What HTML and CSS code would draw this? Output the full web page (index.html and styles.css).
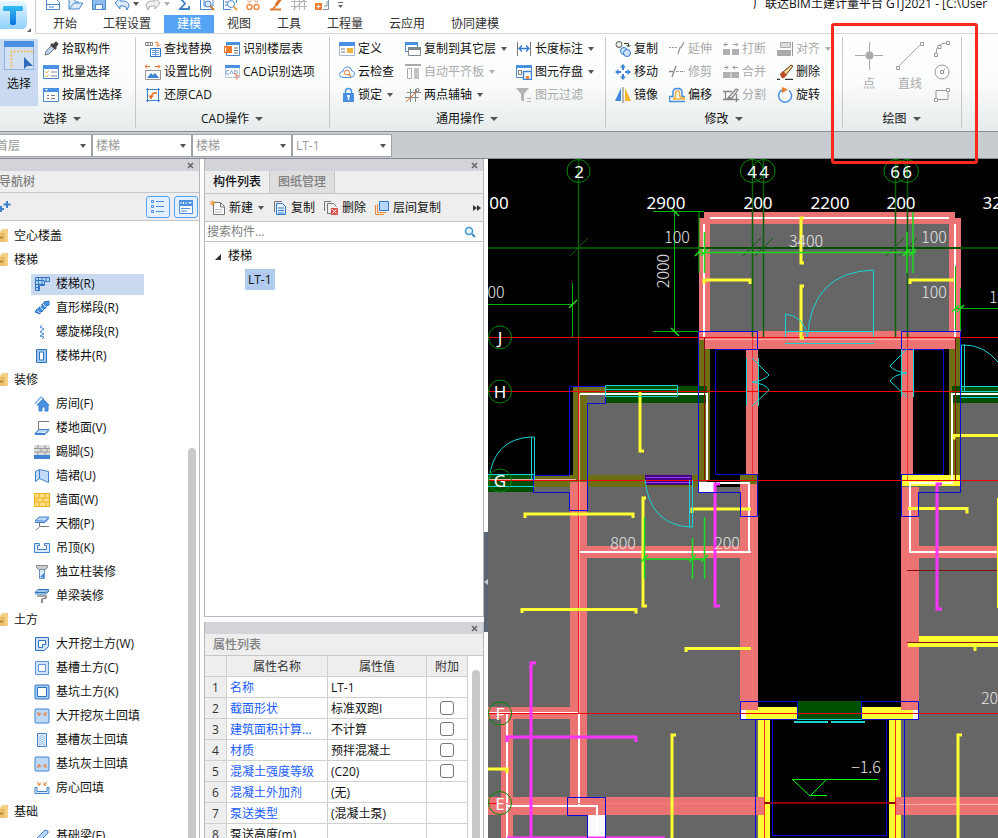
FILE: index.html
```html
<!DOCTYPE html>
<html lang="zh-CN">

<head>
    <meta charset="UTF-8">
    <title>广联达BIM土建计量平台 GTJ2021</title>
    <link rel="stylesheet" href="styles.css">
</head>

<body>
    <!-- shared icons -->
    <svg class="defs" aria-hidden="true">
        <symbol id="folder" viewBox="0 0 16 16">
            <path d="M1 4h7l2-3h6v13H1z" fill="#f3cf87" />
            <path d="M1 5h12v9H1z" fill="#e9bd68" />
            <path d="M6 9.500h5" stroke="#a87b28" stroke-width="1.500" />
        </symbol>
        <symbol id="close" viewBox="0 0 7 7">
            <path d="M1 1l5 5M6 1L1 6" stroke="#666" stroke-width="1.500" />
        </symbol>
    </svg>

    <div class="app">
        <header class="header">
            <button class="logo" aria-label="菜单">
                <svg width="36" height="33" viewBox="0 0 36 33">
                    <defs>
                        <linearGradient id="lg" x1="0" y1="0" x2="0" y2="1">
                            <stop offset="0" stop-color="#e9f7ff" />
                            <stop offset="1" stop-color="#8fd0fb" />
                        </linearGradient>
                        <linearGradient id="lt" x1="0" y1="0" x2="0" y2="1">
                            <stop offset="0" stop-color="#35bdf0" />
                            <stop offset="1" stop-color="#0d6fe0" />
                        </linearGradient>
                    </defs>
                    <rect x="-4" y="1" width="31" height="28" rx="5" fill="url(#lg)" />
                    <path d="M4 6h18q1 0 1 2.500T22 11h-6v12q0 2-3 2t-3-2V11H4q-1 0-1-2.500T4 6z" fill="url(#lt)" />
                    <path d="M31 28v4h-4z" fill="#666" />
                </svg>
            </button>
            <div class="header-main">
                <div class="title-row">
                    <div class="quickbar">
                        <svg class="icon" viewBox="0 0 16 16"><path d="M1.500 3.500h9l4 4v7h-13zM1.500 9.500h13" fill="#fff" stroke="#4a86c8" /><path d="M4 12h5" stroke="#4a86c8" /></svg>
                        <svg class="icon" viewBox="0 0 16 16"><path d="M1 14V4h5l2 3h3M1 14l5-6h9l-4 6z" fill="#dcebfb" stroke="#4a86c8" /></svg>
                        <svg class="icon" viewBox="0 0 16 16"><path d="M1.500 2.500h13v12h-13z" fill="#8ebcf0" stroke="#4a86c8" /><path d="M4.500 9.500h7v5h-7z" fill="#fff" stroke="#4a86c8" /></svg>
                        <svg class="icon" viewBox="0 0 16 16"><path d="M1 8l5-5v3h3q6 0 6 5l-2 4q0-4-4-4H6v3z" fill="#dcebfb" stroke="#4a86c8" /></svg>
                        <i class="caret"></i>
                        <svg class="icon" viewBox="0 0 16 16"><path d="M15 8l-5-5v3H7q-6 0-6 5l2 4q0-4 4-4h3v3z" fill="#f0f0f0" stroke="#aaa" /></svg>
                        <i class="caret off"></i>
                        <svg class="icon" viewBox="0 0 16 16"><path d="M12 3H4l5 5.500L4 14h9v-3" fill="none" stroke="#3f7fc6" stroke-width="1.800" /></svg>
                        <svg class="icon" viewBox="0 0 16 16"><path d="M1.500 2v12.500H15M5 4v7h9V3" fill="none" stroke="#4a86c8" /><circle cx="9" cy="9" r="3" fill="#dcebfb" stroke="#4a86c8" /><path d="M11 11l4 4" stroke="#c57a35" stroke-width="2" /></svg>
                        <svg class="icon" viewBox="0 0 16 16"><path d="M1.500 2v12.500H9M3 7h3M3 10h3M14.500 2v6" fill="none" stroke="#4a86c8" /><circle cx="9" cy="9" r="3.500" fill="#fff" stroke="#4a86c8" /><path d="M11.500 11.500l3.500 3.500" stroke="#e3a33b" stroke-width="2" /></svg>
                        <svg class="icon" viewBox="0 0 16 16"><path d="M3 2v5h3V4h4v3h3V2" fill="none" stroke="#e0b48c" /><circle cx="4.500" cy="12" r="2.500" fill="none" stroke="#f0924d" stroke-width="1.500" /><circle cx="11.500" cy="12" r="2.500" fill="none" stroke="#f0924d" stroke-width="1.500" /></svg>
                        <svg class="icon" viewBox="0 0 16 16"><path d="M14 2L8 10" stroke="#d8742c" stroke-width="3" /><path d="M2 14.500h11M9 9l-4 5" stroke="#e07b36" stroke-width="2" /></svg>
                        <svg class="icon" viewBox="0 0 16 16"><path d="M0 6.500h16M0 11.500h16M3.500 2v13M8.500 2v13M13.500 2v13M2 15L14 4" fill="none" stroke="#b5b5b5" /></svg>
                        <svg class="icon" viewBox="0 0 16 16"><path d="M1 8h7v7H1z" fill="#ee7b30" /><path d="M4.500 9.500v4M2.500 11.500h4" stroke="#fff" /><path d="M9 14.500h5.500V4M10 11h3V6" fill="none" stroke="#8090a8" /></svg>
                        <svg class="icon" viewBox="0 0 16 16"><path d="M1 7.500h5" stroke="#666" /><path d="M1 10h5l-2.500 3z" fill="#666" /></svg>
                    </div>
                    <div class="title">广联达BIM土建计量平台 GTJ2021 - [C:\User</div>
                </div>
                <nav class="tabs">
                    <a href="#">开始</a>
                    <a href="#">工程设置</a>
                    <a href="#" class="active">建模</a>
                    <a href="#">视图</a>
                    <a href="#">工具</a>
                    <a href="#">工程量</a>
                    <a href="#">云应用</a>
                    <a href="#">协同建模</a>
                </nav>
            </div>
        </header>

        <div class="ribbon">
            <section class="group group-select">
                <div class="group-body">
                    <button class="big selected">
                        <svg width="30" height="30" viewBox="0 0 30 30"><path d="M.5.5h29v28H.5z" fill="#d3e0f4" stroke="#8fb2e0" /><path d="M0 0h30v6H0z" fill="#4a90e2" /><path d="M29 10.500H7.500V28" fill="none" stroke="#f3b73f" stroke-width="1.500" stroke-dasharray="2 1.500" /><path d="M20 16v12l3-3h6z" fill="#2c6cb8" /></svg>
                        选择
                    </button>
                    <div class="tools">
                        <button class="tool"><svg class="icon" viewBox="0 0 16 16"><path d="M2 14l1-4 6-6 3 3-6 6z" fill="#b9d3f0" stroke="#777" /><path d="M8 3l5 5M10 5l3-3 1 1-2 3" stroke="#444" stroke-width="2.500" /></svg>拾取构件</button>
                        <button class="tool"><svg class="icon" viewBox="0 0 16 16"><path d="M.5 1.500h15v13H.5z" fill="#fff" stroke="#4a86c8" /><path d="M0 1h16v4H0z" fill="#4a90e2" /><path d="M8 8h6M8 12h6" stroke="#888" /><path d="M2 7.500l1.500 1.500L6 6.500M2 11.500L3.500 13 6 10.500" fill="none" stroke="#e8963c" /></svg>批量选择</button>
                        <button class="tool"><svg class="icon" viewBox="0 0 16 16"><path d="M.5 1.500h15v13H.5z" fill="#fff" stroke="#4a86c8" /><path d="M0 1h16v4H0z" fill="#4a90e2" /><path d="M2 2h3L3.500 4z" fill="#fff" /><path d="M4 8.500h2M8 8.500h4M4 11.500h2M8 11.500h4" stroke="#777" /></svg>按属性选择</button>
                    </div>
                </div>
                <button class="group-label">选择<i class="caret wide"></i></button>
            </section>

            <section class="group group-cad">
                <div class="group-body">
                    <div class="tools">
                        <button class="tool"><svg class="icon" viewBox="0 0 16 16"><path d="M.5 1.500h7v3h-7zM3 1v4M5.500 1v4" fill="none" stroke="#888" /><path d="M10 1.500h3V5M11 3.500l2 2 2-2" fill="none" stroke="#e8752c" /><path d="M5.500 7.500h10v8h-10z" fill="#fff" stroke="#2f74c0" /><path d="M7 9.500h7M7 11.500h7M7 13.500h7M10.500 8v7" stroke="#6ea0dc" /></svg>查找替换</button>
                        <button class="tool"><svg class="icon" viewBox="0 0 16 16"><path d="M0 2.500h5M2 .5l-2 2 2 2M10 2.500h5M13 .5l2 2-2 2" fill="none" stroke="#e8752c" /><path d="M.5 6v9.500h15V6M.5 6.500h15" fill="none" stroke="#999" /><path d="M2 14l4-5 2 2 2-2 4 5z" fill="#3f82cf" /></svg>设置比例</button>
                        <button class="tool"><svg class="icon" viewBox="0 0 16 16"><path d="M1 2.500h14M2.500 1v14M13.500 1v14M1 13.500h14" fill="none" stroke="#3f82cf" /><path d="M6 12q0-7 6-6" fill="none" stroke="#e8752c" stroke-width="1.500" /><path d="M3 8.500h6L6 12z" fill="#e8752c" /></svg>还原CAD</button>
                    </div>
                    <div class="tools">
                        <button class="tool"><svg class="icon" viewBox="0 0 16 16"><path d="M2.500 1.500h13v13h-13z" fill="#fff" stroke="#4a86c8" /><path d="M2 1h14v3H2z" fill="#4a90e2" /><path d="M0 5h8v7H0z" fill="#ee7b30" /><path d="M1.500 6.500v4" stroke="#fff" /><path d="M10 7h4M10 9.500h4M10 12h4" stroke="#777" /></svg>识别楼层表</button>
                        <button class="tool"><svg class="icon" viewBox="0 0 16 16"><path d="M1.500 2.500h14v11h-14z" fill="#fff" stroke="#b8cbe2" /><path d="M1 1h15v3H1z" fill="#4a90e2" /><path d="M5 6.500Q2 6 2 8.500T5 10M6 10l1.500-3.500L9 10M10.500 6.500v3.500q3 0 3-1.700t-3-1.800" fill="none" stroke="#7ba6dc" /><path d="M10 9l4 3-2 .5 1 3" fill="none" stroke="#ea9578" stroke-width="1.500" /></svg>CAD识别选项</button>
                    </div>
                </div>
                <button class="group-label">CAD操作<i class="caret wide"></i></button>
            </section>

            <section class="group group-common">
                <div class="group-body">
                    <div class="tools">
                        <button class="tool"><svg class="icon" viewBox="0 0 16 16"><path d="M.5 1.500h15v13H.5z" fill="#fff" stroke="#a9b9cc" /><path d="M0 1h16v4H0z" fill="#4a90e2" /><path d="M8 7h6v5H8z" fill="#f0b23e" /><path d="M2 8h4M2 11h4" stroke="#777" /></svg>定义</button>
                        <button class="tool"><svg class="icon" viewBox="0 0 16 16"><path d="M4 13.500q-3.500 0-3.500-3T4 7.500q.5-4.500 4.500-4.500t4 3.500q3 .5 3 3.500t-3.500 3.500z" fill="#fff" stroke="#4a90e2" /><circle cx="8" cy="8.500" r="2.500" fill="none" stroke="#e8752c" /><path d="M10 10.500l2 2" stroke="#e8752c" stroke-width="1.500" /></svg>云检查</button>
                        <button class="tool"><svg class="icon" viewBox="0 0 16 16"><path d="M6.500 7V4.500q0-3 3-3t3 3V7" fill="none" stroke="#4a90e2" stroke-width="1.500" /><path d="M4 6h11v9H4z" fill="#4a90e2" /><path d="M9.500 8v5M8 9h3" stroke="#fff" stroke-width="1.500" /></svg>锁定<i class="caret"></i></button>
                    </div>
                    <div class="tools">
                        <button class="tool"><svg class="icon" viewBox="0 0 16 16"><path d="M.5 1.500h12v9H.5z" fill="#fff" stroke="#4a86c8" /><path d="M0 1h13v3H0z" fill="#4a90e2" /><path d="M3.500 6.500h12v8h-12z" fill="#fff" stroke="#7c8a90" /><path d="M3 6h13v3H3z" fill="#7c8a90" /></svg>复制到其它层<i class="caret"></i></button>
                        <button class="tool off"><svg class="icon" viewBox="0 0 16 16"><path d="M0 1h16" stroke="#aaa" stroke-width="2" /><path d="M2.500 4.500h4v10h-4z" fill="none" stroke="#aaa" /><path d="M9 4h5v11H9z" fill="#c4c4c4" /></svg>自动平齐板<i class="caret off"></i></button>
                        <button class="tool"><svg class="icon" viewBox="0 0 16 16"><path d="M2 5.500h14M0 10.500h14M5.500 2v13M10.500 2v13" stroke="#888" /><path d="M1 15L13 3" stroke="#e8752c" /><circle cx="12.500" cy="3" r="1.500" fill="#fff" stroke="#777" /></svg>两点辅轴<i class="caret"></i></button>
                    </div>
                    <div class="tools">
                        <button class="tool"><svg class="icon" viewBox="0 0 16 16"><path d="M1.500 1v14M14.500 1v14" stroke="#777" /><path d="M3 7.500h10M6 4.500l-3 3 3 3M10 4.500l3 3-3 3" fill="none" stroke="#2f79cf" stroke-width="1.300" /></svg>长度标注<i class="caret"></i></button>
                        <button class="tool"><svg class="icon" viewBox="0 0 16 16"><path d="M.5 1.500h15v12H.5z" fill="#fff" stroke="#4a86c8" /><path d="M0 1h16v3H0z" fill="#4a90e2" /><path d="M2.500 6.500h3v4h-3z" fill="none" stroke="#777" /><path d="M7.500 7.500h8v8h-8z" fill="#fff" stroke="#3f82cf" stroke-width="1.500" /><path d="M10 12h3v3h-3z" fill="#ee7b30" /></svg>图元存盘<i class="caret"></i></button>
                        <button class="tool off"><svg class="icon" viewBox="0 0 16 16"><path d="M0 1h13L8 7v8l-3-2V7z" fill="#b3b3b3" /><path d="M11 11.500h4M11 14.500h4" stroke="#b3b3b3" /></svg>图元过滤</button>
                    </div>
                </div>
                <button class="group-label">通用操作<i class="caret wide"></i></button>
            </section>

            <section class="group group-modify">
                <div class="group-body">
                    <div class="tools">
                        <button class="tool"><svg class="icon" viewBox="0 0 16 16"><circle cx="4" cy="3.500" r="3" fill="#eee" stroke="#555" /><circle cx="9" cy="10" r="3.500" fill="#cfe2f7" stroke="#2f79cf" /><circle cx="12" cy="12" r="3.500" fill="#cfe2f7" stroke="#2f79cf" /><path d="M9 2.500h4.500V5M11.500 4l2 2 2-2" fill="none" stroke="#333" /></svg>复制</button>
                        <button class="tool"><svg class="icon" viewBox="0 0 16 16"><path d="M8 0l3 3.500H5zM8 16l3-3.500H5zM0 8l3.500-3v6zM16 8l-3.500-3v6z" fill="#3f86d8" /><path d="M8 3v3M8 10v3M3 8h3M10 8h3" stroke="#3f86d8" stroke-width="2" /></svg>移动</button>
                        <button class="tool"><svg class="icon" viewBox="0 0 16 16"><path d="M6 1v13H0z" fill="#3f86d8" /><path d="M10 1v13h6z" fill="#f5b62c" /><path d="M8 0v16" stroke="#777" /></svg>镜像</button>
                    </div>
                    <div class="tools">
                        <button class="tool off"><svg class="icon" viewBox="0 0 16 16"><path d="M0 6.500h8" stroke="#999" stroke-dasharray="2 1" /><path d="M9 13l2-6.500h1L15 1" fill="none" stroke="#999" stroke-width="1.300" /></svg>延伸</button>
                        <button class="tool off"><svg class="icon" viewBox="0 0 16 16"><path d="M0 7.500h4M3 13L7 2" stroke="#888" stroke-width="1.300" /><path d="M7 7.500h9" stroke="#999" stroke-dasharray="3 1" /></svg>修剪</button>
                        <button class="tool"><svg class="icon" viewBox="0 0 16 16"><path d="M16 14.500H.5V9.500H4V5q0-3.500 4.500-3.500T13 5v4.500h3" fill="none" stroke="#4a90e2" stroke-width="1.500" /><path d="M16 12H4q3-1 2.500-4V6q0-2 2-2t2 2v2q0 3 5.500 3" fill="none" stroke="#f0b23e" stroke-width="1.500" /></svg>偏移</button>
                    </div>
                    <div class="tools">
                        <button class="tool off"><svg class="icon" viewBox="0 0 16 16"><path d="M0 8h7v6H0zM9 8h7v6H9z" fill="#b0b0b0" /><path d="M1 3.500h4M3 1.500l-2 2 2 2M10 3.500h4M13 1.500l2 2-2 2" fill="none" stroke="#999" /></svg>打断</button>
                        <button class="tool off"><svg class="icon" viewBox="0 0 16 16"><path d="M0 8h16v6H0z" fill="#b0b0b0" /><path d="M8 8v6" stroke="#e5e5e5" /><path d="M1 3.500h4M3 1.500l2 2-2 2M10 3.500h5M12 1.500l-2 2 2 2" fill="none" stroke="#999" /></svg>合并</button>
                        <button class="tool off"><svg class="icon" viewBox="0 0 16 16"><path d="M0 4.500h9M2.500 4v9M0 12.500h16M13.500 7v8M5 11l8-9 2 1-6 8z" fill="none" stroke="#888" stroke-width="1.300" /></svg>分割</button>
                    </div>
                    <div class="tools">
                        <button class="tool off"><svg class="icon" viewBox="0 0 16 16"><path d="M3.500 1.500h10v5h-10z" fill="#ddd" stroke="#aaa" /><path d="M0 9h14v6H0z" fill="#aaa" /><path d="M15.500 1v14" stroke="#999" /></svg>对齐<i class="caret off"></i></button>
                        <button class="tool"><svg class="icon" viewBox="0 0 16 16"><path d="M6 8l8-7 2 1-7 9z" fill="#f3d088" stroke="#5b4426" /><path d="M3 10l3-3 4 4-3 3q-3 1-4-4z" fill="#b94a2a" /><path d="M0 15.500h3M8 15.500h8" stroke="#333" stroke-width="1.500" /></svg>删除</button>
                        <button class="tool"><svg class="icon" viewBox="0 0 16 16"><path d="M5 3A6.500 6.500 0 1 0 12 3.500" fill="none" stroke="#4a90e2" stroke-width="1.500" /><path d="M5 0l6 2.500L5 6z" fill="#ee7b30" /></svg>旋转</button>
                    </div>
                </div>
                <button class="group-label">修改<i class="caret wide"></i></button>
            </section>

            <section class="group group-draw">
                <div class="group-body">
                    <button class="big off">
                        <svg width="30" height="30" viewBox="0 0 30 30"><path d="M15.500 1v10M15.500 19v10M1 14.500h10M20 14.500h9" stroke="#aaa" /><circle cx="15.500" cy="14.500" r="4" fill="#aaa" /></svg>
                        点
                    </button>
                    <button class="big off">
                        <svg width="30" height="30" viewBox="0 0 30 30"><path d="M3 26L26 3" stroke="#aaa" /><path d="M1.500 25.500h3v3h-3zM25.500 1.500h3v3h-3z" fill="#fff" stroke="#999" /></svg>
                        直线
                    </button>
                    <div class="tools">
                        <button class="tool" aria-label="弧"><svg class="icon" viewBox="0 0 16 16"><path d="M2 13Q2 2 13 2" fill="none" stroke="#999" /><path d="M.5 12.500h3v3h-3zM12.500.5h3v3h-3zM4 4.500h3v3H4z" fill="#fff" stroke="#999" /></svg></button>
                        <button class="tool" aria-label="圆"><svg class="icon" viewBox="0 0 16 16"><circle cx="8" cy="8" r="7" fill="none" stroke="#999" /><path d="M8 8l3-3" stroke="#999" /><path d="M6.500 6.500h3v3h-3z" fill="#fff" stroke="#999" /></svg></button>
                        <button class="tool" aria-label="矩形"><svg class="icon" viewBox="0 0 16 16"><path d="M2 3.500h12v9H2z" fill="none" stroke="#999" /><path d="M.5 11.500h3v3h-3zM12.500 1.500h3v3h-3z" fill="#fff" stroke="#999" /></svg></button>
                    </div>
                </div>
                <button class="group-label">绘图<i class="caret wide"></i></button>
            </section>
        </div>

        <div class="combos">
            <label class="combo"><select aria-label="楼层"><option>首层</option></select></label>
            <label class="combo"><select aria-label="构件分类"><option>楼梯</option></select></label>
            <label class="combo"><select aria-label="构件类型"><option>楼梯</option></select></label>
            <label class="combo"><select aria-label="构件"><option>LT-1</option></select></label>
        </div>

        <main class="workspace">
            <aside class="nav">
                <div class="strip"><button aria-label="关闭"><svg width="7" height="7"><use href="#close" /></svg></button></div>
                <h2 class="nav-title">导航树</h2>
                <div class="nav-tools">
                    <svg class="plus" width="12" height="14" viewBox="0 0 12 14"><path d="M7 1v7M3.500 4.500h7M1 6v6M-1 9h5" stroke="#3f82cf" stroke-width="2" /></svg>
                    <button class="view" aria-label="列表视图"><svg width="14" height="14" viewBox="0 0 14 14"><path d="M.5.500h2v2h-2zM.5 5.500h2v2h-2zM.5 10.500h2v2h-2zM5 1.500h8M5 6.500h8M5 11.500h8" fill="none" stroke="#4a90e2" /></svg></button>
                    <button class="view" aria-label="图标视图"><svg width="14" height="14" viewBox="0 0 14 14"><path d="M.5.500h13v13H.5z" fill="#fff" stroke="#4a90e2" /><path d="M0 0h14v6H0z" fill="#4a90e2" /><path d="M2 2v2M4.500 2v2M7 2v2" stroke="#fff" /><path d="M9 2h4l-2 2z" fill="#fff" /><path d="M2 8.500h9M2 11h6" stroke="#4a90e2" /></svg></button>
                </div>
                <div class="tree-wrap">
                    <ul class="tree">
                        <li class="cat"><svg class="icon"><use href="#folder" /></svg>空心楼盖</li>
                        <li class="cat"><svg class="icon"><use href="#folder" /></svg>楼梯</li>
                        <li><a href="#" class="active"><svg class="icon" viewBox="0 0 16 16"><path d="M1.500 1.500h14v4h-5v4h-5v5h-4zM1.500 4.500h9M4.500 1.500v13M8 1.500v8M12 1.500v4M1.500 8.500h9M1.500 11.500h4" fill="#b9d5f6" stroke="#2f74c0" /></svg>楼梯(R)</a></li>
                        <li><a href="#"><svg class="icon" viewBox="0 0 16 16"><path d="M1 12l2-3h2V7h3V4h2V2l5-1v4l-3 1v2l-3 1v2l-3 1v2z" fill="#4a90e2" stroke="#2f74c0" /><path d="M3 10l3 3M6 7l3 3M9 4l3 3" stroke="#d6e7fb" /></svg>直形梯段(R)</a></li>
                        <li><a href="#"><svg class="icon" viewBox="0 0 16 16"><path d="M8 1l-2 2 4 2-4 3 4 2-4 2 4 1-2 2" fill="none" stroke="#3f82cf" /></svg>螺旋梯段(R)</a></li>
                        <li><a href="#"><svg class="icon" viewBox="0 0 16 16"><path d="M2.500 1.500h10v13h-10z" fill="#a3c9f3" stroke="#2f74c0" /><path d="M5.500 4h4v8h-4z" fill="#fff" stroke="#2f74c0" /></svg>楼梯井(R)</a></li>
                        <li class="cat"><svg class="icon"><use href="#folder" /></svg>装修</li>
                        <li><a href="#"><svg class="icon" viewBox="0 0 16 16"><path d="M1 8l6-7 3 2" fill="none" stroke="#7db2ee" stroke-width="1.500" /><path d="M3 9l6-6 6 6h-1v6h-3v-4H8v4H5V9z" fill="#4a90e2" stroke="#3f82cf" /></svg>房间(F)</a></li>
                        <li><a href="#"><svg class="icon" viewBox="0 0 16 16"><path d="M15 1.500H4.500V10L1 13.500" fill="none" stroke="#777" /><path d="M5 9.500h10l-4 4H1zM1 14.500h10l4-4" fill="#b9d5f6" stroke="#3f82cf" /></svg>楼地面(V)</a></li>
                        <li><a href="#"><svg class="icon" viewBox="0 0 16 16"><path d="M0 1h16v10H0z" fill="#ddd" /><path d="M0 4.500h16M0 8h16M4 1v3M11 1v3M7 5v3M13 5v3M4 8v3M11 8v3" stroke="#999" /><path d="M0 11h16v4H0z" fill="#3f82cf" /></svg>踢脚(S)</a></li>
                        <li><a href="#"><svg class="icon" viewBox="0 0 16 16"><path d="M1.500 3.500l4-2v9l-4 3zM5.500 1.500l9 2v11l-9-4z" fill="#c5dcf8" stroke="#3f82cf" /></svg>墙裙(U)</a></li>
                        <li><a href="#"><svg class="icon" viewBox="0 0 16 16"><path d="M.5 1.500h15v13H.5z" fill="#ffe08a" stroke="#eeac17" /><path d="M0 6h16M0 10h16M5 2v4M11 2v4M3 6v4M9 6v4M5 10v4M12 10v4" stroke="#eeac17" /></svg>墙面(W)</a></li>
                        <li><a href="#"><svg class="icon" viewBox="0 0 16 16"><path d="M1 5l4-4h10l-4 4zM1 6.500h10l4-4" fill="#b9d5f6" stroke="#3f82cf" /><path d="M5.500 7v4L2 14M5.500 10.500H15" fill="none" stroke="#777" /></svg>天棚(P)</a></li>
                        <li><a href="#"><svg class="icon" viewBox="0 0 16 16"><path d="M.5 3.500h5v2h-2v4h9v-4h-2v-2h5v9H.5z" fill="#dceafb" stroke="#3f82cf" /></svg>吊顶(K)</a></li>
                        <li><a href="#"><svg class="icon" viewBox="0 0 16 16"><path d="M2.500 1.500h11v2l-2 2h-7l-2-2z" fill="#ccc" stroke="#888" /><path d="M5.500 5.500h5v9h-5z" fill="#dceafb" stroke="#6d8fb8" /><path d="M6 13l4-4v5z" fill="#4a90e2" /></svg>独立柱装修</a></li>
                        <li><a href="#"><svg class="icon" viewBox="0 0 16 16"><path d="M1 4.500L4 1.500h11l-3 3z" fill="#9fc6f3" stroke="#2f74c0" /><path d="M1 6h11l3-3" fill="none" stroke="#2f74c0" /><path d="M3 8h9v2l-4 1v2" fill="none" stroke="#888" stroke-width="1.500" /><path d="M7 12h2v3H7z" fill="#888" /></svg>单梁装修</a></li>
                        <li class="cat"><svg class="icon"><use href="#folder" /></svg>土方</li>
                        <li><a href="#"><svg class="icon" viewBox="0 0 16 16"><path d="M1.500 1.500h13v9l-4 4h-9z" fill="#cfe2f9" stroke="#2f74c0" /><path d="M4.500 4.500h7v4h-3v3h-4z" fill="#fff" stroke="#2f74c0" /></svg>大开挖土方(W)</a></li>
                        <li><a href="#"><svg class="icon" viewBox="0 0 16 16"><path d="M1.500 1.500h13v13h-13z" fill="#cfe2f9" stroke="#5f97dc" /><path d="M4.500 4.500h7v7h-7z" fill="#fff" stroke="#5f97dc" /></svg>基槽土方(C)</a></li>
                        <li><a href="#"><svg class="icon" viewBox="0 0 16 16"><rect x="1" y="1" width="14" height="14" rx="1" fill="#a9ccf5" stroke="#2f74c0" /><path d="M3.500 3.500h9v9h-9z" fill="#fff" stroke="#2f74c0" /></svg>基坑土方(K)</a></li>
                        <li><a href="#"><svg class="icon" viewBox="0 0 16 16"><rect x="1" y="1" width="14" height="14" rx="1" fill="#bdd8f7" stroke="#3f82cf" /><path d="M3 4l3 3M6 4.500V7H3.500M13 4l-3 3M10 4.500V7h2.500" fill="none" stroke="#e8752c" /></svg>大开挖灰土回填</a></li>
                        <li><a href="#"><svg class="icon" viewBox="0 0 16 16"><path d="M3.500 1.500h9v13h-9z" fill="#dceafb" stroke="#3f82cf" /><path d="M8 3v10M6 4v9M10 4v9" stroke="#6ea5e0" stroke-dasharray="1 1" /></svg>基槽灰土回填</a></li>
                        <li><a href="#"><svg class="icon" viewBox="0 0 16 16"><rect x="1" y="1" width="14" height="14" rx="1" fill="#bdd8f7" stroke="#3f82cf" /><path d="M3 12l3-3M3.500 9H6v2.500M13 12l-3-3M12.500 9H10v2.500" fill="none" stroke="#e8752c" /></svg>基坑灰土回填</a></li>
                        <li><a href="#"><svg class="icon" viewBox="0 0 16 16"><path d="M1 7.500h2v4h10v-4h2v6H1z" fill="#dceafb" stroke="#3f82cf" /><path d="M3 2l3 3M6 2.500V5H3.500M13 2l-3 3M10 2.500V5h2.500" fill="none" stroke="#e8752c" /></svg>房心回填</a></li>
                        <li class="cat"><svg class="icon"><use href="#folder" /></svg>基础</li>
                        <li><a href="#"><svg class="icon" viewBox="0 0 16 16"><path d="M1 12L11 2l3 1v2L4 15z" fill="#b9d5f6" stroke="#3f82cf" /></svg>基础梁(F)</a></li>
                    </ul>
                    <i class="thumb thumb-nav"></i>
                </div>
            </aside>

            <div class="middle">
                <section class="panel list-panel">
                    <div class="strip"><button aria-label="关闭"><svg width="7" height="7"><use href="#close" /></svg></button></div>
                    <div class="panel-tabs">
                        <button class="active">构件列表</button>
                        <button>图纸管理</button>
                    </div>
                    <div class="panel-tools">
                        <button class="tool"><svg class="icon" viewBox="0 0 16 16"><path d="M3.500 2.500h7l4 4v8h-11zM10.500 3v4h4" fill="#fff" stroke="#777" /><path d="M5 9.500h7M5 12h7" stroke="#bbb" /><path d="M0 3h5M2.500.5v5M.5 1l4 4M4.500 1l-4 4" stroke="#f0a23c" /></svg>新建<i class="caret"></i></button>
                        <button class="tool"><svg class="icon" viewBox="0 0 16 16"><path d="M2.500 12V1.500H10" fill="none" stroke="#777" /><path d="M4.500 3.500h6l3 3v8h-9z" fill="#e2effd" stroke="#2f79cf" /><path d="M6 8h6M6 10.500h6M6 13h6" stroke="#2f79cf" /></svg>复制</button>
                        <button class="tool"><svg class="icon" viewBox="0 0 16 16"><path d="M1.500 11V1.500H8M4.500 13V3.500h6l3 3M8 13.500H4" fill="none" stroke="#777" /><path d="M8 8h7v7H8z" fill="#d9534f" /><path d="M9.500 9.500l4 4M13.500 9.500l-4 4" stroke="#fff" /></svg>删除</button>
                        <button class="tool"><svg class="icon" viewBox="0 0 16 16"><path d="M1.500 5v9.500H10M3.500 4v8.500H12" fill="none" stroke="#e8853c" /><path d="M5.500 1.500h9v9h-9z" fill="#b6d6fa" stroke="#2f79cf" /></svg>层间复制</button>
                        <button class="more" aria-label="更多"><svg width="8" height="6" viewBox="0 0 8 6"><path d="M0 0l4 3-4 3zM4 0l4 3-4 3z" fill="#333" /></svg></button>
                    </div>
                    <div class="search">
                        <input type="text" placeholder="搜索构件..." aria-label="搜索构件">
                        <svg width="12" height="12" viewBox="0 0 12 12"><circle cx="5" cy="5" r="3.500" fill="#eaf4fc" stroke="#3a97d4" stroke-width="1.500" /><path d="M8 8l3 3" stroke="#3a87c4" stroke-width="2" /></svg>
                    </div>
                    <ul class="parts">
                        <li><svg width="6" height="6" viewBox="0 0 6 6"><path d="M6 0v6H0z" fill="#333" /></svg>楼梯
                            <ul>
                                <li><a href="#" class="active">LT-1</a></li>
                            </ul>
                        </li>
                    </ul>
                </section>

                <section class="panel props-panel">
                    <div class="strip"><button aria-label="关闭"><svg width="7" height="7"><use href="#close" /></svg></button></div>
                    <h2 class="props-title">属性列表</h2>
                    <div class="props-body">
                        <table class="props">
                            <colgroup><col class="c-no"><col class="c-name"><col class="c-val"><col class="c-add"></colgroup>
                            <thead>
                                <tr><th></th><th>属性名称</th><th>属性值</th><th>附加</th></tr>
                            </thead>
                            <tbody>
                                <tr><th>1</th><td class="name">名称</td><td>LT-1</td><td></td></tr>
                                <tr><th>2</th><td class="name">截面形状</td><td>标准双跑I</td><td><input type="checkbox" aria-label="截面形状"></td></tr>
                                <tr><th>3</th><td class="name">建筑面积计算...</td><td>不计算</td><td><input type="checkbox" aria-label="建筑面积计算"></td></tr>
                                <tr><th>4</th><td class="name">材质</td><td>预拌混凝土</td><td><input type="checkbox" aria-label="材质"></td></tr>
                                <tr><th>5</th><td class="name">混凝土强度等级</td><td>(C20)</td><td><input type="checkbox" aria-label="混凝土强度等级"></td></tr>
                                <tr><th>6</th><td class="name">混凝土外加剂</td><td>(无)</td><td></td></tr>
                                <tr><th>7</th><td class="name">泵送类型</td><td>(混凝土泵)</td><td></td></tr>
                                <tr><th>8</th><td>泵送高度(m)</td><td></td><td></td></tr>
                            </tbody>
                        </table>
                        <i class="thumb thumb-props"></i>
                    </div>
                </section>
            </div>

            <div class="splitter"><button aria-label="收起"></button></div>

            <svg class="drawing" viewBox="488 159 510 679" preserveAspectRatio="xMinYMin slice">
                <rect x="488" y="159" width="510" height="679" fill="#000" />

                <!-- slabs -->
                <g fill="#666">
                    <path d="M704 218h251v119H704z" />
                    <path d="M587 395h120v95H587z" />
                    <path d="M488 487h270v351H488z" />
                    <path d="M955 403h43v435H901V484h54z" />
                </g>
                <path d="M758 484h143v354H758z" />

                <!-- walls -->
                <g fill="#6e6e14">
                    <path d="M699 340h11v140h-11zM949 337h12v140h-12z" />
                    <path d="M573 386h32v9h-18v80h112v12H534v-12h39z" />
                </g>
                <g fill="#005000">
                    <path d="M605 386h102v17H605zM488 475h46v17h-46zM952 386h46v17h-46z" />
                </g>
                <g fill="#eb7373">
                    <path d="M704 212h251v12H704zM699 218h11v122h-11zM949 218h12v120h-12zM704 331h251v18H704z" />
                    <path d="M746 349h12v130h-12zM901 349h12v130h-12z" />
                    <path d="M740 484h18v226h-18zM901 487h18v223h-18z" />
                    <path d="M570 482h17v320h-17zM587 546h153v12H587zM919 546h79v12h-79z" />
                    <path d="M488 707h82v12h-82zM501 713h12v125h-12zM488 797h276v18H488zM895 797h103v18H895z" />
                </g>
                <g fill="#ffff33">
                    <path d="M901 475h60v11h-60zM919 636h79v11h-79zM908 643h11v4h-11z" />
                    <path d="M746 710h12v-3h39v12h-27v119h-12V719h-12zM862 707h39v3h12v9h-12v119h-12V719h-27z" />
                </g>
                <path d="M740 797h24v18h-24zM895 797h24v18h-24z" fill="#eb7373" />
                <path d="M740 474h18v10h-18z" fill="#6e6e14" />
                <path d="M797 701h65v18h-65z" fill="#005000" />
                <path d="M645 475h47v10h-47z" fill="#46008c" />
                <path d="M646 477.500h45M646 482.500h45" stroke="#9a40e8" />
                <path d="M699 482h16v10h-16zM588 815h17v23h-17zM740 710h6v9h-6zM913 710h6v9h-6z" fill="#fafafa" />

                <!-- wall centre lines -->
                <g fill="none" stroke="#fff" stroke-width="2">
                    <path d="M710 218h239M704 224v114M955 224v113" />
                    <path d="M580 394h127v86M716 483h33v69M580 552h171" />
                    <path d="M998 394h-46v89h-42v69h88" />
                    <path d="M488 713h91v93M507 713v125M507 806h90v32" />
                </g>
                <path d="M704 339.500h251M488 479.500h88M579.500 394v319M899 804.500h99" fill="none" stroke="#f0b0a8" />

                <!-- axis grid -->
                <path d="M488 248h510" stroke="#004f00" stroke-width="2" />
                <g fill="none" stroke="#0a5f0a">
                    <path d="M578.500 159v179M752.500 159v179M763.500 159v179M895.500 159v179M907.500 159v179" stroke-width="1.500" />
                    <path d="M570 256l18-18M743 256l18-18M755 256l18-18M886 256l18-18M899 256l18-18" />
                </g>
                <g stroke="#f00000" fill="none">
                    <path d="M488 337.500h510M488 391.500h510M488 480.500h510M488 713.500h510" />
                    <path d="M578.500 338v375M764.500 719v119M895.500 719v119" stroke-opacity=".8" />
                    <path d="M752.500 338v142M907.500 338v142" stroke-opacity=".6" />
                    <path d="M488 803.500h13" />
                </g>
                <path d="M501 803.500h257M919 803.500h79M752.500 484v226M907.500 487v223" stroke="#ff7878" />
                <path d="M764 803h131" stroke="#900000" stroke-width="2" />
                <path d="M907 570.500h91M907 642.500h91M704.500 338v142M955.500 338v142" fill="none" stroke="#801010" />

                <!-- rebar -->
                <g fill="none" stroke="#ffff33" stroke-width="3">
                    <path d="M704 284v-4h46v4M804 218h-3v45h3M804 286h-3v52h3M910 284v-4h44" />
                    <path d="M640 392v59h4M525 518v-4h108v4M522 613v-3.500h114v4M646 498h-3v108h4" />
                    <path d="M692 513v-4h59M686 652v-3.500h65M676 735h-4v103M488 769h19v4" />
                    <path d="M998 435.500h-44v4M908 508.500h59v5M975 647v4M962 735h-4v103" />
                    <path d="M998 498v110" stroke-width="2" />
                </g>
                <g fill="none" stroke="#ff33ff" stroke-width="3">
                    <path d="M720 484h-5v122h5M536 663h-5v175M507 742v-5h129v5M942 484h-5v125h5M507 838h158" />
                </g>

                <!-- dimensions -->
                <g fill="none" stroke="#00b400">
                    <path d="M488 304.500h85M572.500 283v54M674.500 212v120M653 211.500h51M653 331.500h51" />
                    <path d="M699 212v61M955 308.500h43M955.500 266v64M960.500 288v42" />
                </g>
                <g fill="none" stroke="#1edc1e" stroke-width="1.500">
                    <path d="M699 252.500h217M704.500 232v41M907 232v41M913 212v61" />
                    <path d="M643 559h62M644.500 517v62M692.500 538v41M704.500 517v62" />
                    <path d="M569 308l8-8M671 208l8 8M671 328l8 8M695 256l7-7M701 256l7-7M903 256l7-7M909 256l7-7M641 562l7-7M689 562l7-7M701 562l7-7M952 312l7-7M957 312l7-7" />
                    <path d="M792 779.500h86M792 779l18 17 17-17M810 795.500h17" stroke="#00ff00" stroke-width="1" />
                </g>

                <!-- columns -->
                <g fill="none" stroke="#0a0ad8">
                    <path d="M698.500 331.500h59v18h-42v125h42v42h-17v-24h-42z" />
                    <path d="M901.500 331.500h59v161h-42v24h-17v-42h42v-125h-42z" />
                    <path d="M569.500 386.500h36v17h-18v107h-18v-18h-36v-17h36z" />
                    <path d="M740.500 701.500h57v18h-57zM861.500 701.500h57v18h-57z" />
                    <path d="M772.500 719.500v116h114v-116M755.500 719v119M904.500 719v119" />
                    <path d="M605.500 838v-40.500h-38v18h20v22.500" />
                </g>

                <!-- doors and windows -->
                <g fill="none" stroke="#19d2d2">
                    <path d="M873.500 337v-67q-62 2-66 67M785.500 337v-23q19 2 22 23M785 331.500h89M785 343.500h89" />
                    <path d="M605.500 385.500h72v11h-72zM605 389.500h73" />
                    <path d="M534.500 480v-43h-3v43M531 437q-38 2-42 43M488 474.500h46M488 486.500h46" />
                    <path d="M689.500 480v47h3v-47M690 527q-40-2-45-47" />
                    <path d="M961.500 391v-46h3v46M964 345q20 0 34 17M961 386.500h37M961 391.500h37M961 397.500h37" />
                    <path d="M746.500 358v48M758.500 358v48M752 358l17 17q-5 6-17 7 14 2 17 8l-17 16" />
                    <path d="M901.500 349v48M913.500 349v48M907 349l-17 17q5 6 17 7-14 2-17 8l17 16" />
                    <path d="M797 719.500h65" />
                    <path d="M794 722h34M831 722h34" stroke-width="2" />
                </g>

                <!-- axis marks -->
                <g fill="none" stroke="#008a00">
                    <circle cx="578.500" cy="171" r="11.500" />
                    <circle cx="752" cy="171" r="11.500" />
                    <circle cx="763.500" cy="171" r="11.500" />
                    <circle cx="895.500" cy="171" r="11.500" />
                    <circle cx="907" cy="171" r="11.500" />
                    <circle cx="500" cy="337.500" r="11.500" />
                    <circle cx="500" cy="391.500" r="11.500" />
                    <circle cx="500" cy="480.500" r="11.500" />
                    <circle cx="500" cy="713.500" r="11.500" />
                    <circle cx="500" cy="803" r="11.500" />
                </g>
                <g class="mark">
                    <text x="579" y="178">2</text>
                    <text x="752" y="178">4</text>
                    <text x="764" y="178">4</text>
                    <text x="895" y="178">6</text>
                    <text x="907" y="178">6</text>
                    <text x="500" y="344">J</text>
                    <text x="500" y="398">H</text>
                    <text x="500" y="487">G</text>
                    <text x="500" y="720">F</text>
                    <text x="500" y="810">E</text>
                    <text x="499" y="209">00</text>
                    <text x="666" y="209">2900</text>
                    <text x="758" y="209">200</text>
                    <text x="830" y="209">2200</text>
                    <text x="901" y="209">200</text>
                    <text x="1002" y="209">3200</text>
                </g>
                <g class="dim">
                    <text x="496" y="298">00</text>
                    <text x="677" y="243">100</text>
                    <text x="669" y="271" transform="rotate(-90 669 271)">2000</text>
                    <text x="806" y="247">3400</text>
                    <text x="934" y="243">100</text>
                    <text x="934" y="298">100</text>
                    <text x="1006" y="303">1900</text>
                    <text x="623" y="549">800</text>
                    <text x="727" y="549">200</text>
                    <text x="998" y="704">2000</text>
                    <text x="866" y="773">−1.6</text>
                </g>
            </svg>
        </main>

        <!-- highlight around the drawing tools -->
        <div class="highlight"></div>
    </div>
</body>

</html>
```
FILE: styles.css
```css
* {
    box-sizing: border-box;
}

html,
body {
    height: 100%;
}

body {
    margin: 0;
    overflow: hidden;
    font: 12px/16px "Open Sans", "Noto Sans CJK SC", sans-serif;
    color: #111;
    background: #fff;
}

button,
input,
select {
    font: inherit;
    color: inherit;
}

button {
    padding: 0;
    border: 0;
    background: none;
    white-space: nowrap;
}

a {
    color: inherit;
    text-decoration: none;
}

ul {
    margin: 0;
    padding: 0;
    list-style: none;
}

h2 {
    margin: 0;
    font-size: 12px;
    font-weight: 500;
    color: #808080;
}

.defs {
    display: none;
}

.icon {
    flex: none;
    width: 16px;
    height: 16px;
}

.caret {
    flex: none;
    border: 3px solid transparent;
    border-top: 4px solid #555;
    border-bottom: 0;
}

.caret.wide {
    border-width: 4px 4px 0;
}

.caret.off {
    border-top-color: #b0b0b0;
}

.app {
    position: relative;
    display: flex;
    flex-direction: column;
    height: 100%;
    overflow: hidden;
}

/* header */
.header {
    display: flex;
    flex: none;
    height: 34px;
}

.logo {
    flex: none;
    width: 36px;
    border-right: 1px solid #ccc;
    border-bottom: 1px solid #fff;
    overflow: hidden;
}

.logo svg {
    display: block;
}

.header-main {
    flex: 1;
    min-width: 0;
    border-bottom: 1px solid #d5d5d5;
}

.title-row {
    display: flex;
    height: 15px;
}

.quickbar {
    display: flex;
    flex: none;
    align-items: flex-end;
    gap: 7px;
    width: 717px;
    height: 11px;
    padding-left: 9px;
    overflow: hidden;
}

.quickbar .caret {
    margin: 0 -1px 5px -4px;
}

.title {
    flex: 1;
    min-width: 0;
    overflow: hidden;
    line-height: 8px;
    white-space: nowrap;
}

.tabs {
    display: flex;
    padding-left: 4px;
}

.tabs a {
    padding: 0 13px;
    line-height: 18px;
    color: #333;
}

.tabs .active {
    background: #55a3f5;
    color: #fff;
}

/* ribbon */
.ribbon {
    display: flex;
    flex: none;
    height: 98px;
    padding-top: 3px;
    border-bottom: 1px solid #8b8f95;
    background: linear-gradient(#fff, #fbfcfc 50%, #e6ebeb);
}

.group {
    position: relative;
    display: flex;
    flex-direction: column;
    flex: none;
    padding-left: 9px;
}

.group::after {
    content: "";
    position: absolute;
    top: 0;
    right: 0;
    bottom: 3px;
    width: 1px;
    background: #c6c8ca;
}

.group-body {
    display: grid;
    height: 69px;
}

.group-select {
    width: 136px;
    padding-left: 0;
}

.group-select .group-body {
    grid-template-columns: 43px 1fr;
}

.group-cad {
    width: 194px;
}

.group-cad .group-body {
    grid-template-columns: 79px 1fr;
}

.group-common {
    width: 276px;
}

.group-common .group-body {
    grid-template-columns: 66px 111px 1fr;
}

.group-modify {
    width: 237px;
}

.group-modify .group-body {
    grid-template-columns: 54px 54px 54px 1fr;
}

.group-draw {
    width: 119px;
}

.group-draw .group-body {
    grid-template-columns: 41px 41px 1fr;
}

.tools {
    display: flex;
    flex-direction: column;
}

.tool {
    display: flex;
    align-items: center;
    gap: 3px;
    height: 23px;
}

.tool .caret {
    margin-left: 2px;
}

.tool.off,
.big.off {
    color: #aaa;
}

.big {
    display: flex;
    flex-direction: column;
    align-items: center;
    gap: 5px;
    padding-top: 4px;
}

.group-draw .big {
    width: 34px;
}

.big.selected {
    width: 38px;
    height: 67px;
    margin-top: 2px;
    padding-top: 2px;
    background: #c9d9f0;
}

.group-label {
    display: flex;
    align-items: center;
    justify-content: center;
    gap: 6px;
    height: 25px;
    margin: 0 2px 0 -9px;
}

.group-select .group-label {
    margin: 0 12px 0 0;
}

/* combos */
.combos {
    display: flex;
    flex: none;
    height: 27px;
    padding-top: 2px;
    border-bottom: 1px solid #868b92;
    background: #c8cbd0;
}

.combo {
    position: relative;
    width: 100px;
    height: 23px;
}

.combo:first-child {
    margin-left: -8px;
}

.combo::after {
    content: "";
    position: absolute;
    top: 10px;
    right: 6px;
    border: 3px solid transparent;
    border-top: 4px solid #555;
    border-bottom: 0;
}

.combo select {
    width: 100%;
    height: 100%;
    padding: 0 3px;
    border: 1px solid #a0a2a6;
    border-radius: 0;
    background: #fff;
    color: #999;
    appearance: none;
}

/* workspace */
.workspace {
    display: flex;
    flex: 1;
    min-height: 0;
}

.strip {
    display: flex;
    flex: none;
    justify-content: flex-end;
    height: 12px;
    padding: 3px 5px 0 0;
    background: #d3d4d9;
}

.strip button,
.strip svg {
    display: block;
    width: 7px;
    height: 7px;
}

.thumb {
    position: absolute;
    bottom: 0;
    width: 8px;
    border-radius: 4px 4px 0 0;
    background: #c8c8c8;
}

/* navigation tree */
.nav {
    display: flex;
    flex-direction: column;
    flex: none;
    width: 200px;
    border-right: 1px solid #b5b7bb;
    overflow: hidden;
}

.nav-title {
    height: 22px;
    margin-left: -1px;
    border-bottom: 1px solid #c4c6ca;
    background: #eee;
    line-height: 22px;
}

.nav-tools {
    display: flex;
    align-items: center;
    gap: 4px;
    height: 28px;
    padding-right: 1px;
    border-bottom: 1px solid #c4c6ca;
    background: #eee;
}

.plus {
    margin-right: auto;
}

.view {
    display: flex;
    align-items: center;
    justify-content: center;
    width: 24px;
    height: 22px;
    border: 1px solid #55a3f5;
    border-radius: 3px;
    background: #e3f0fd;
}

.tree-wrap {
    position: relative;
    flex: 1;
    min-height: 0;
    padding-top: 3px;
    overflow: hidden;
}

.tree li {
    display: flex;
    align-items: center;
    height: 24px;
    padding-left: 31px;
}

.tree .cat {
    gap: 6px;
    padding-left: 0;
}

.tree .cat .icon {
    margin-left: -8px;
}

.tree a {
    display: flex;
    align-items: center;
    gap: 6px;
    width: 113px;
    height: 21px;
    padding-left: 3px;
    white-space: nowrap;
}

.tree .active {
    background: #c9d9f0;
}

.thumb-nav {
    top: 227px;
    right: 3px;
}

/* middle column */
.middle {
    display: flex;
    flex-direction: column;
    flex: none;
    gap: 5px;
    width: 280px;
    margin-left: 4px;
}

.panel {
    display: flex;
    flex-direction: column;
    border: 1px solid #b5b7bb;
    border-top: 0;
}

.list-panel {
    flex: 0 0 458px;
}

.props-panel {
    flex: 1;
    min-height: 0;
    border-bottom: 0;
    overflow: hidden;
}

.panel-tabs {
    display: flex;
    flex: none;
    height: 23px;
    border-bottom: 1px solid #c4c6ca;
    background: #eee;
}

.panel-tabs button {
    width: 65px;
    border-right: 1px solid #c4c6ca;
    background: #dedede;
    font-weight: 500;
    color: #808080;
}

.panel-tabs .active {
    background: #eee;
    color: #111;
}

.panel-tools {
    display: flex;
    flex: none;
    align-items: center;
    gap: 8px;
    height: 28px;
    padding: 0 2px 0 5px;
    border-bottom: 1px solid #c4c6ca;
    background: #eee;
}

.more {
    margin-left: auto;
}

.more svg {
    display: block;
}

.search {
    display: flex;
    flex: none;
    align-items: center;
    height: 20px;
    padding-right: 7px;
    border-bottom: 1px solid #c4c6ca;
}

.search input {
    flex: 1;
    min-width: 0;
    height: 18px;
    padding: 0 2px;
    border: 0;
    outline: none;
}

.search input::placeholder {
    color: #808080;
}

.parts {
    padding-top: 2px;
    line-height: 24px;
}

.parts > li {
    padding-left: 10px;
}

.parts svg {
    margin-right: 7px;
}

.parts ul {
    padding-left: 30px;
}

.parts a {
    display: inline-block;
    padding: 0 3px;
    line-height: 21px;
}

.parts .active {
    background: #b0cbee;
}

/* properties */
.props-title {
    flex: none;
    height: 22px;
    padding-left: 8px;
    border-bottom: 1px solid #c4c6ca;
    background: #eee;
    line-height: 22px;
}

.props-body {
    position: relative;
    flex: 1;
    min-height: 0;
}

.props {
    width: 263px;
    border-collapse: separate;
    border-spacing: 0;
    table-layout: fixed;
}

.c-no {
    width: 22px;
}

.c-name {
    width: 101px;
}

.c-val {
    width: 99px;
}

.c-add {
    width: 41px;
}

.props th,
.props td {
    height: 21px;
    padding: 2px 3px 0;
    border-right: 1px solid #d0d0d0;
    border-bottom: 1px solid #d0d0d0;
    line-height: 16px;
    white-space: nowrap;
}

.props th {
    padding: 2px 0 0;
    background: #eee;
    font-weight: 400;
    color: #333;
    text-align: center;
}

.props .name {
    color: #1a5cff;
}

.props td:last-child {
    padding-top: 0;
    text-align: center;
}

.props input {
    display: block;
    width: 14px;
    height: 14px;
    margin: 0 auto;
    border: 1px solid #777;
    border-radius: 3px;
    background: #fff;
    appearance: none;
}

.thumb-props {
    top: 14px;
    right: 3px;
}

/* drawing */
.splitter {
    display: flex;
    flex: none;
    align-items: flex-start;
    width: 4px;
}

.splitter button {
    display: flex;
    align-items: center;
    width: 4px;
    height: 100px;
    margin-top: 373px;
    background: #5c6672;
}

.splitter button::after {
    content: "";
    border: 3px solid transparent;
    border-right: 4px solid #c5ccd4;
    border-left: 0;
}

.drawing {
    flex: 1;
    min-width: 0;
    height: 100%;
}

.mark,
.dim {
    fill: #fff;
    text-anchor: middle;
}

.mark {
    font: 17px "Noto Sans", sans-serif;
}

.dim {
    font: 300 16px "Liberation Sans Narrow", "Noto Sans CJK SC", sans-serif;
    fill: #e4e4e4;
}

.highlight {
    position: absolute;
    top: 23px;
    left: 831px;
    width: 147px;
    height: 141px;
    border: 3px solid #ff2a1c;
    border-radius: 3px;
    pointer-events: none;
}
```
